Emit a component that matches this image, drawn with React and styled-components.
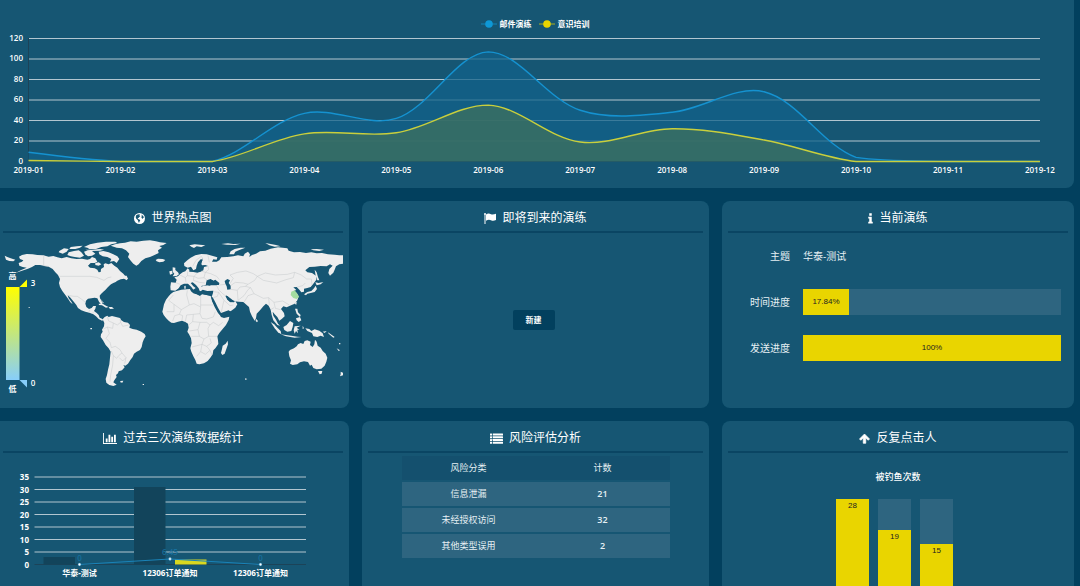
import React from 'react';
import styled, { createGlobalStyle } from 'styled-components';

const theme = {
    page: '#02405e',
    panel: '#165673',
    rule: '#0a4563',
    track: '#2e6580',
    headRow: '#14506e',
    white: '#ffffff',
    text: '#e6f0f4',
    yellow: '#e9d500',
    blue: '#0e98d6',
    line: '#b3c6d0',
    axis: '#1c4358',
    land: '#eeeeee',
    border: '#c4c8ca',
};

const GlobalStyle = createGlobalStyle`
  * {
    box-sizing: border-box;
  }
  body {
    margin: 0;
    background-color: ${theme.page};
    color: ${theme.text};
    font-family: "Open Sans", "Noto Sans CJK SC", sans-serif;
    overflow-x: hidden;
  }
`;

const Page = styled.main`
    display: flex;
    flex-direction: column;
    gap: 13px;
    padding-right: 6px;
    height: 100vh;
    overflow: hidden;
`;

const TopPanel = styled.section`
    flex: none;
    background-color: ${theme.panel};
    border-radius: 0 0 8px 0;
    padding-top: 18px;
`;

const Legend = styled.ul`
    display: flex;
    justify-content: center;
    gap: 7px;
    margin: 0;
    padding: 0 4px 0 0;
    list-style: none;
    font-size: 8px;
    line-height: 12px;
    font-weight: 600;
    color: ${theme.white};
`;

const LegendItem = styled.li`
    display: flex;
    align-items: center;
    gap: 3px;
`;

const Chart = styled.svg`
    display: block;
    width: 100%;
    height: auto;
`;

const LegendMark = styled.svg`
    width: 16px;
    height: 8px;
`;

const AxisText = styled.text`
    font-size: 8px;
    font-weight: ${(p) => (p.$bold ? 700 : 600)};
    fill: ${(p) => p.$color || theme.white};
    text-anchor: ${(p) => p.$anchor || 'middle'};
`;

const Grid = styled.div`
    flex: none;
    display: grid;
    grid-template-columns: 349fr 347fr 352fr;
    gap: 13px;
`;

const PanelBox = styled.section`
    display: flex;
    flex-direction: column;
    min-width: 0;
    min-height: 207px;
    background-color: ${theme.panel};
    border-radius: ${(p) => (p.$edge ? '0 8px 8px 0' : '8px')};
    padding: ${(p) => (p.$edge ? '0 6px 0 3px' : '0 6px')};
`;

const PanelTitle = styled.h2`
    display: flex;
    align-items: center;
    justify-content: center;
    gap: 6px;
    margin: 0;
    height: 32px;
    padding-top: 4px;
    border-bottom: 2px solid ${theme.rule};
    font-size: 12px;
    line-height: 16px;
    font-weight: 400;
    color: ${theme.white};

    svg {
        height: 11px;
        width: auto;
        fill: currentColor;
    }
`;

const Centered = styled.div`
    flex: 1;
    display: grid;
    place-items: center;
    padding: 0 4px 2px 0;
`;

const CreateBtn = styled.button`
    width: 42px;
    height: 20px;
    padding: 0;
    border: none;
    border-radius: 2px;
    background-color: ${theme.page};
    color: ${theme.white};
    font-family: inherit;
    font-size: 8px;
    font-weight: 600;
    cursor: pointer;
`;

const DrillList = styled.dl`
    display: grid;
    grid-template-columns: 62px 1fr;
    column-gap: 13px;
    row-gap: 20px;
    margin: 0;
    padding: 10px 7px 0 0;
    font-size: 10px;
    line-height: 26px;
`;

const DrillLabel = styled.dt`
    text-align: right;
`;

const DrillValue = styled.dd`
    margin: 0;
`;

const Track = styled.div`
    height: 26px;
    background-color: ${theme.track};
`;

const Fill = styled.div`
    height: 100%;
    background-color: ${theme.yellow};
    color: #222;
    font-family: "Liberation Sans", Arial, sans-serif;
    font-size: 8px;
    text-align: center;
`;

const RiskTable = styled.table`
    width: 80%;
    margin: 1px auto 0;
    table-layout: fixed;
    border-collapse: separate;
    border-spacing: 0 2px;
    font-size: 9px;
    line-height: 14px;
    text-align: center;

    th {
        height: 24px;
        padding: 0;
        font-weight: 400;
        background-color: ${theme.headRow};
    }

    td {
        height: 24px;
        padding: 0;
        background-color: ${theme.track};
    }
`;

const Count = styled.td`
    font-weight: 600;
`;

const ClickCaption = styled.p`
    margin: 17px 0 15px;
    font-size: 9px;
    line-height: 14px;
    font-weight: 500;
    text-align: center;
    color: ${theme.white};
`;

const Columns = styled.div`
    display: flex;
    justify-content: center;
    gap: 9px;
    padding-right: 7px;
`;

const ColumnTrack = styled.div`
    display: flex;
    align-items: flex-end;
    width: 33px;
    height: 97px;
    background-color: ${theme.track};
`;

const ColumnFill = styled(Fill)`
    width: 100%;
    line-height: 14px;
`;

// Icons

const GlobeIcon = () => (
    <svg viewBox="0 0 22 22" aria-hidden="true">
        <circle cx="11" cy="11" r="11" />
        <path
            fill={theme.panel}
            d="M4 5 L7 3 L11 2.500 L12 4 L10.500 5 L12.500 6.500 L10.500 8 L9 10 L7.500 10 L8 12 L11 13 L12.500 15 L11 17 L10 20 L8.500 17 L7.500 14 L5 12 L3.500 9 Z M14 3 L18 5.500 L20 9 L18.500 9.500 L17.500 12 L15.500 10 L14.500 8 L16 6 Z"
        />
    </svg>
);

const FlagIcon = () => (
    <svg viewBox="0 0 24 22" aria-hidden="true">
        <circle cx="2" cy="2" r="2" />
        <path d="M1 3 H3 V22 H1 Z" />
        <path d="M4 3 C8 0 11 1 14 2.500 C17 4 20 3 24 1.500 V14 C20 16 17 16 14 14.500 C11 13 8 13 4 15.500 Z" />
    </svg>
);

const InfoIcon = () => (
    <svg viewBox="0 0 10 22" aria-hidden="true">
        <path d="M2.500 0.500 H7.500 V5.500 H2.500 Z M0.500 7.500 H7.500 V17.500 H9.500 V21 H0.500 V17.500 H2.500 V11 H0.500 Z" />
    </svg>
);

const BarChartIcon = () => (
    <svg viewBox="0 128 2048 1536" aria-hidden="true">
        <path d="M640 896v512H384V896h256z m384-512v1024H768V384h256z m1024 1152v128H0V128h128v1408h1920z m-640-896v768h-256V640h256z m384-256v1024h-256V384h256z" />
    </svg>
);

const ListIcon = () => (
    <svg viewBox="0 0 26 22" aria-hidden="true">
        {[1, 6.5, 12, 17.5].map((y) => (
            <g key={y}>
                <rect x="0" y={y} width="4" height="4" rx="0.5" />
                <rect x="5.500" y={y} width="20.500" height="4" rx="0.5" />
            </g>
        ))}
    </svg>
);

const ArrowUpIcon = () => (
    <svg viewBox="0 0 22 22" aria-hidden="true">
        <path
            d="M11 2 L21 12 L18.500 14.500 L13.500 10 V20.500 H8.500 V10 L3.500 14.500 L1 12 Z"
            stroke="currentColor"
            strokeWidth="1.500"
            strokeLinejoin="round"
        />
    </svg>
);

const Panel = ({ icon, title, edge, children }) => (
    <PanelBox $edge={edge}>
        <PanelTitle>
            {icon}
            {title}
        </PanelTitle>
        {children}
    </PanelBox>
);

// Trend chart
const months = Array.from({ length: 12 }, (_, i) => `2019-${String(i + 1).padStart(2, '0')}`);
const mailDrills = [9, 0, 0, 47, 42, 107, 50, 48, 68, 4, 0, 0];
const trainings = [1, 0, 0, 27, 28, 55, 19, 32, 21, 0, 0, 0];

const trendX = (i) => 28.5 + i * 91.95;
const trendY = (v) => 131.5 - v * 1.025;

// smooth line through all points, control points never leave the plotted range
const smoothPath = (values) => {
    const pts = values.map((v, i) => [trendX(i), trendY(v)]);
    const top = Math.min(...pts.map((p) => p[1]));
    const bottom = Math.max(...pts.map((p) => p[1]));
    const clamp = (y) => Math.min(bottom, Math.max(top, y));
    const controls = pts.map((p, i) => {
        const prev = pts[i - 1];
        const next = pts[i + 1];
        if (!prev || !next) return [p, p];
        const dPrev = Math.hypot(p[0] - prev[0], p[1] - prev[1]);
        const dNext = Math.hypot(next[0] - p[0], next[1] - p[1]);
        const ratio = dNext / (dNext + dPrev);
        const vx = (next[0] - prev[0]) * 0.34;
        const vy = (next[1] - prev[1]) * 0.34;
        return [
            [p[0] - vx * (1 - ratio), clamp(p[1] - vy * (1 - ratio))],
            [p[0] + vx * ratio, clamp(p[1] + vy * ratio)],
        ];
    });
    return pts.reduce(
        (d, p, i) => (i === 0 ? `M${p}` : `${d} C${controls[i - 1][1]} ${controls[i][0]} ${p}`),
        ''
    );
};

const TrendChart = () => {
    const mail = smoothPath(mailDrills);
    const training = smoothPath(trainings);
    const close = ` L${trendX(11)},131.5 L${trendX(0)},131.5 Z`;
    return (
        <Chart viewBox="0 0 1074 158" role="img" aria-label="演练趋势">
            {[20, 40, 60, 80, 100, 120].map((v) => (
                <path key={v} d={`M28.500 ${trendY(v)} H1040`} stroke={theme.line} />
            ))}
            <path d="M28.500 8 V131.500 H1040" fill="none" stroke={theme.axis} />
            <path d={mail + close} fill="#11628a" fillOpacity="0.75" />
            <path d={training + close} fill="#3a6e62" fillOpacity="0.85" />
            <path d={mail} fill="none" stroke="#1592d0" strokeWidth="1.400" />
            <path d={training} fill="none" stroke="#c9cf3c" strokeWidth="1.400" />
            {[0, 20, 40, 60, 80, 100, 120].map((v) => (
                <AxisText key={v} x="23" y={trendY(v) + 2} $anchor="end">{v}</AxisText>
            ))}
            {months.map((m, i) => (
                <AxisText key={m} x={trendX(i)} y="143">{m}</AxisText>
            ))}
        </Chart>
    );
};

// World map
const americas = [
    // mainland north america
    'M57 65 L66 60 L80 57 L98 58 L112 60 L130 61 L146 65 L160 63 L172 67 L185 70 L200 66 L214 70 L230 72 L246 71 L262 74 L270 72 L276 66 L286 70 L292 80 L284 84 L272 84 L264 92 L270 98 L284 100 L292 104 L296 112 L302 111 L303 102 L312 96 L311 88 L316 85 L326 88 L334 84 L343 92 L352 98 L360 108 L370 116 L376 124 L383 130 L381 136 L372 131 L362 133 L352 137 L347 141 L340 144 L333 148 L328 152 L322 158 L316 165 L310 170 L303 177 L299 182 L300 190 L305 198 L307 206 L303 208 L297 200 L292 190 L284 188 L274 190 L264 191 L258 197 L256 206 L259 216 L267 222 L275 219 L280 213 L288 213 L286 221 L282 228 L290 234 L296 240 L299 248 L306 251 L311 255 L306 257 L296 252 L288 244 L280 238 L268 233 L256 230 L244 226 L234 219 L229 210 L220 199 L210 187 L203 181 L206 190 L214 200 L218 208 L211 202 L203 190 L196 180 L187 168 L180 156 L177 144 L180 132 L174 120 L166 112 L158 102 L146 95 L134 93 L120 90 L106 90 L96 96 L84 101 L66 107 L48 113 L62 106 L80 98 L68 96 L58 92 L56 84 L66 80 L70 76 L60 72 Z',
    // greenland
    'M332 32 L345 28 L360 25 L375 23 L392 19 L410 20 L430 17 L450 16 L468 19 L480 22 L500 24 L490 30 L478 33 L486 38 L474 46 L476 54 L462 61 L450 66 L436 70 L424 78 L416 88 L409 92 L400 86 L391 76 L384 66 L388 56 L378 46 L366 40 L350 38 Z',
    // arctic islands
    'M252 36 L270 28 L292 23 L318 20 L346 20 L352 24 L334 28 L322 34 L304 36 L288 42 L268 42 L262 38 Z',
    'M296 50 L310 48 L326 52 L340 58 L352 64 L358 72 L350 84 L342 78 L330 80 L334 72 L322 66 L308 64 L298 58 Z',
    'M206 52 L222 48 L236 46 L244 52 L252 62 L240 68 L224 66 L212 64 L202 60 Z',
    'M178 48 L192 40 L206 42 L200 50 L188 56 L176 52 Z',
    'M212 36 L230 34 L248 32 L240 38 L226 42 L208 42 Z',
    'M252 50 L264 46 L276 48 L286 56 L276 62 L264 64 L256 58 Z',
    'M256 44 L276 44 L300 42 L312 44 L300 47 L270 48 Z',
    'M286 84 L296 82 L304 88 L296 92 L286 90 Z',
    'M366 122 L380 122 L384 132 L374 130 L364 128 Z',
    // iceland, aleutians
    'M467 75 L474 71 L488 72 L496 75 L490 80 L478 82 L470 79 Z',
    'M14 62 L22 66 L32 70 L46 74 L40 79 L28 78 L18 74 Z',
    // caribbean and pacific dots
    'M296 206 L308 206 L318 212 L326 216 L318 218 L306 211 L297 210 Z',
    'M326 216 L336 216 L342 221 L330 222 Z',
    'M304 192 L308 200 L312 204 L308 205 Z',
    'M271 279 H276 V283 H271 Z M86 216 H89 V219 H86 Z M361 438 L370 437 L367 443 L361 442 Z M428 447 H432 V450 H428 Z',
    // south america
    'M308 253 L314 246 L322 242 L326 246 L336 243 L348 246 L360 249 L364 256 L372 261 L384 263 L390 270 L388 278 L398 282 L410 284 L424 290 L434 297 L437 304 L432 312 L428 322 L425 336 L420 345 L410 350 L402 356 L398 366 L391 375 L384 386 L376 392 L370 390 L374 397 L366 406 L356 409 L354 415 L348 420 L350 426 L344 434 L340 442 L350 449 L340 453 L328 450 L319 443 L317 432 L321 420 L324 404 L328 388 L330 368 L332 350 L326 340 L317 330 L309 316 L302 306 L303 298 L308 290 L306 284 L312 274 L313 264 Z',
];

const oldWorld = [
    // africa
    'M520 291 L530 288 L544 284 L560 283 L570 282 L573 289 L580 295 L590 298 L600 303 L606 298 L616 299 L632 303 L634 310 L638 320 L644 332 L650 344 L657 356 L663 366 L672 369 L688 365 L686 375 L678 390 L668 402 L658 414 L652 424 L654 436 L655 447 L646 460 L640 466 L638 478 L631 488 L623 498 L612 505 L598 508 L590 506 L586 495 L580 484 L574 470 L571 460 L575 444 L573 430 L567 418 L562 410 L566 398 L564 386 L556 381 L546 377 L534 380 L522 384 L514 383 L506 377 L498 369 L491 360 L487 350 L489 342 L492 328 L498 314 L506 304 L512 297 Z',
    'M683 437 L684 448 L679 462 L674 476 L667 480 L663 474 L666 462 L668 452 L677 446 Z',
    // eurasia
    'M512 286 L511 275 L513 262 L527 263 L530 254 L523 247 L534 244 L540 238 L548 232 L556 229 L563 220 L568 224 L568 230 L580 231 L592 233 L602 230 L610 226 L612 216 L624 213 L616 210 L606 211 L602 205 L608 195 L602 193 L594 202 L590 212 L588 222 L580 226 L573 215 L563 218 L553 213 L552 205 L562 196 L572 188 L586 181 L604 177 L620 178 L636 182 L652 187 L650 194 L640 193 L636 200 L650 200 L658 196 L664 187 L682 186 L700 184 L714 181 L730 184 L734 176 L744 170 L750 178 L748 186 L756 180 L768 176 L780 169 L796 167 L812 161 L834 157 L862 160 L866 167 L882 172 L900 171 L918 174 L934 172 L950 175 L966 174 L984 178 L1004 179 L1018 181 L1030 181 L1030 206 L1018 208 L1008 214 L1004 224 L1000 233 L990 242 L985 234 L988 222 L998 212 L990 208 L980 214 L962 213 L944 215 L928 216 L916 226 L922 232 L936 234 L948 242 L949 254 L940 266 L932 276 L922 279 L912 281 L912 290 L904 292 L898 284 L890 276 L880 277 L889 285 L881 288 L890 294 L896 304 L892 316 L884 326 L870 332 L860 337 L850 334 L843 342 L852 354 L854 364 L846 371 L838 377 L832 366 L824 358 L818 350 L820 362 L828 374 L834 386 L840 392 L832 390 L820 376 L815 360 L812 344 L806 332 L798 326 L790 334 L780 346 L770 356 L768 370 L764 377 L756 364 L750 350 L747 336 L740 330 L730 321 L716 320 L702 319 L694 312 L682 303 L676 302 L682 314 L692 322 L706 319 L712 328 L706 338 L694 347 L678 355 L662 361 L656 350 L648 334 L640 318 L635 306 L639 294 L640 287 L622 288 L608 284 L602 277 L610 272 L628 271 L650 271 L657 268 L648 262 L636 262 L640 256 L626 256 L620 262 L617 270 L604 273 L608 284 L600 290 L596 280 L588 270 L578 262 L572 264 L580 274 L587 279 L580 284 L574 276 L564 266 L552 266 L542 271 L536 280 L526 287 Z',
    // british isles
    'M518 217 L526 218 L526 225 L534 232 L537 238 L530 243 L518 244 L523 236 L518 230 Z',
    'M508 229 L516 227 L518 236 L510 239 Z',
    // arctic islands
    'M568 151 L584 148 L600 149 L616 151 L604 156 L590 154 L582 159 L574 155 Z',
    'M688 178 L692 169 L704 162 L722 158 L736 158 L718 165 L706 170 L702 178 Z',
    'M664 147 L684 145 L700 147 L722 146 L706 150 L680 149 Z',
    'M796 144 L812 147 L828 150 L842 154 L824 155 L808 151 Z',
    'M932 163 L950 162 L972 164 L958 168 L940 166 Z',
    // mediterranean islands
    'M560 286 H568 V289 H560 Z M553 273 L557 272 L557 281 L553 281 Z M606 292 H614 V294 H606 Z',
    // japan and sakhalin
    'M946 262 L956 264 L970 261 L962 268 L950 271 Z',
    'M947 272 L951 282 L944 291 L932 294 L922 296 L918 301 L912 298 L922 291 L934 288 L942 280 Z',
    'M944 224 L950 232 L954 246 L958 256 L952 256 L947 242 Z',
    // south east asia
    'M886 321 L890 321 L889 329 L885 327 Z M885 341 L892 341 L894 352 L902 360 L900 366 L890 356 Z M888 370 L900 366 L904 376 L896 381 L890 376 Z',
    'M812 381 L822 388 L832 398 L842 408 L844 418 L834 412 L824 400 Z',
    'M842 418 L858 420 L874 422 L892 425 L904 426 L884 428 L858 424 Z',
    'M850 396 L860 390 L870 378 L880 384 L878 396 L874 408 L862 410 L853 405 Z',
    'M884 394 L902 392 L890 398 L898 404 L892 404 L894 415 L888 408 L884 416 L881 406 Z M908 392 L912 400 L908 402 Z',
    'M916 400 L928 402 L934 408 L944 403 L958 407 L968 415 L972 426 L962 422 L952 426 L940 424 L936 414 L922 408 Z',
    'M968 410 L980 408 L974 414 Z M984 412 L1004 426 L1000 428 L986 416 Z M1017 444 H1021 V448 H1017 Z M1010 460 L1020 466 L1016 468 Z',
    'M768 371 L774 378 L771 382 L767 378 Z M735 550 L742 552 L736 555 Z',
    // australia, tasmania, new zealand
    'M866 470 L870 465 L882 460 L890 454 L894 448 L902 444 L910 447 L914 438 L922 436 L932 440 L930 450 L938 456 L943 448 L945 434 L950 440 L953 452 L962 458 L968 468 L977 476 L982 488 L979 500 L974 512 L964 521 L950 523 L940 519 L935 509 L930 512 L924 501 L912 499 L900 502 L892 508 L878 510 L870 506 L873 496 L868 484 Z',
    'M954 528 L967 528 L965 536 L959 538 Z',
    'M1022 530 L1030 534 L1030 540 L1020 544 L1022 538 Z',
];

// seas cut out of the land shapes
const seas = [
    'M618 268 L620 256 L632 252 L640 257 L646 254 L658 264 L657 270 L640 267 L628 272 Z',
    'M674 258 L682 252 L690 256 L686 264 L692 272 L692 283 L682 284 L680 274 L676 266 Z',
    'M634 307 L638 307 L646 322 L654 338 L663 354 L686 346 L692 350 L688 358 L664 364 L654 354 L644 336 L636 318 Z',
    'M678 301 L684 305 L692 314 L704 318 L702 322 L690 321 L682 313 Z',
    'M600 206 L604 194 L608 190 L604 208 L600 220 L590 225 L592 212 Z',
    'M570 281 L580 284 L592 288 L604 289 L634 290 L634 302 L616 299 L606 296 L598 300 L582 294 Z',
];

const borderLines = [
    'M131 60 V92 L144 94 M179 124 H270 L290 127 L302 132 L312 136 L324 128 L334 126',
    'M203 181 L222 184 L232 184 L244 192 L256 202 M276 236 L282 230 M266 232 L270 224',
    'M322 244 L326 258 L340 264 L338 280 L322 276 L310 282 M340 264 L352 270 L362 262 L360 250 M362 262 L368 274 L386 270 M322 276 L328 296 L318 310 L330 322 L334 338 L346 334 L360 344 L366 354 L356 362 L350 370 L340 362 L334 348 M366 354 L378 368 L368 378 L358 368 M340 362 L338 390 L332 420 L330 440 M378 368 L374 386',
];

const oldBorderLines = [
    'M520 300 L506 316 L522 328 V350 L500 350 M522 328 L544 344 L568 330 L560 300 L562 286 M568 330 L582 326 L602 336 V302 M602 330 H640 M602 336 L600 356 L606 370 L620 372 L640 366 L646 350 M544 344 L538 358 L524 362 L518 378 M538 358 L548 362 L546 376 M556 380 L560 360 L580 358 L600 356 M580 358 L578 380 L566 390 M578 380 L600 382 L620 382 L630 390 L640 382 L656 392 L668 382 M600 382 L594 404 L568 408 M594 404 L598 424 H574 M598 424 L612 432 L626 424 L624 400 L630 390 M626 424 L652 424 M612 432 L606 448 L576 456 M606 448 L620 454 L634 444 L630 430 M606 448 L602 470 L590 484 M602 470 L616 478 L630 466 L620 454 M630 466 L636 480',
    'M528 263 L540 268 M540 240 L556 248 L558 262 M563 230 L562 242 L556 248 M562 242 L582 244 L592 234 M582 244 L594 250 L612 248 L622 256 M582 244 L580 256 L598 262 L614 264 M612 248 L616 232 L604 228 M616 232 L632 236 L650 244 L658 254 M608 190 L604 184 L588 196 L578 214 M624 182 L628 202 M624 213 L626 224 L616 232',
    'M658 270 L676 268 M650 272 L656 284 L668 296 L676 302 M640 290 L656 292 L672 316 L690 332 L700 330 M640 308 L652 304 L656 292 M672 316 L668 332 L664 352 M690 266 L700 250 L690 240 L712 232 L738 228 L760 236 L772 244 L764 256 L744 268 L730 264 L706 262 L692 272 M692 283 L712 286 L720 276 L736 274 L744 268 M712 286 L714 316 L732 302 L744 284 L752 278 M736 274 L752 278 L762 296 L790 310 L806 308 L808 330 M732 322 L744 302 L762 296 M772 244 L796 234 L826 240 L862 238 L884 232 L904 240 L920 252 L934 252 L936 270 M772 244 L790 256 L830 264 L858 254 L880 248 L884 232 M806 308 L822 322 L848 318 L868 330 M822 322 L826 340 L842 344 M812 344 L822 338 M892 276 L908 272 L916 264',
];

const WorldMap = () => (
    <Chart viewBox="0 0 340 164" role="img" aria-label="世界热点图">
        <defs>
            <linearGradient id="heat" x1="0" y1="0" x2="0" y2="1">
                <stop offset="0" stopColor="#ffff00" />
                <stop offset="1" stopColor="#87cefa" />
            </linearGradient>
        </defs>
        <g transform="translate(-3 2) scale(0.33333)" fill={theme.land} stroke="none">
            {americas.map((d) => <path key={d} d={d} />)}
            {borderLines.map((d) => <path key={d} d={d} fill="none" stroke={theme.border} strokeWidth="1.500" />)}
            <g transform="translate(0 -120)">
                {oldWorld.map((d) => <path key={d} d={d} />)}
                {seas.map((d) => <path key={d} d={d} fill={theme.panel} />)}
                {oldBorderLines.map((d) => <path key={d} d={d} fill="none" stroke={theme.border} strokeWidth="1.500" />)}
                <path d="M874 290 L884 286 L892 296 L897 306 L890 312 L880 309 L872 300 Z" fill="#a3dda0" />
            </g>
        </g>
        <rect x="3" y="54" width="13.500" height="93" fill="url(#heat)" />
        <path d="M16.500 54 H24 V46.500 Z" fill="#ffff00" />
        <path d="M16.500 147 H24 V154.500 Z" fill="#87cefa" />
        <AxisText x="9.500" y="46">高</AxisText>
        <AxisText x="9.500" y="159">低</AxisText>
        <AxisText x="30" y="53">3</AxisText>
        <AxisText x="30" y="153">0</AxisText>
    </Chart>
);

// Last three drills
const drills = [
    { name: '华泰-测试', sent: 3, clicked: 0, rate: 0, label: '0' },
    { name: '12306订单通知', sent: 31, clicked: 2, rate: 2.2, label: '6.45' },
    { name: '12306订单通知', sent: 0, clicked: 0, rate: 0, label: '0' },
];

const drillX = (i) => 76.5 + i * 90.5;
const drillY = (v) => 111.5 - v * 2.5;

const DrillChart = () => (
    <Chart viewBox="0 0 340 132" role="img" aria-label="过去三次演练数据统计">
        {[5, 10, 15, 20, 25, 30, 35].map((v) => (
            <path key={v} d={`M31.500 ${drillY(v)} H303`} stroke={theme.line} />
        ))}
        <path d="M31.500 111.500 H303" stroke={theme.axis} />
        {drills.map((d, i) => (
            <g key={i}>
                <rect x={drillX(i) - 36} y={drillY(d.sent)} width="31.500" height={d.sent * 2.5} fill="#12445b" />
                <rect x={drillX(i) + 5} y={drillY(d.clicked)} width="31.500" height={d.clicked * 2.5} fill="#d9d820" />
            </g>
        ))}
        <path
            d={`M${drills.map((d, i) => `${drillX(i)} ${drillY(d.rate)}`).join(' L')}`}
            fill="none"
            stroke="#1a83b8"
        />
        {drills.map((d, i) => (
            <g key={i}>
                <circle cx={drillX(i)} cy={drillY(d.rate)} r="1.400" fill={theme.white} stroke="#1a83b8" strokeWidth="0.5" />
                <AxisText x={drillX(i)} y={drillY(d.rate) - 4} $color="#176f9c">{d.label}</AxisText>
                <AxisText x={drillX(i)} y="123" $bold>{d.name}</AxisText>
            </g>
        ))}
        {[0, 5, 10, 15, 20, 25, 30, 35].map((v) => (
            <AxisText key={v} x="26" y={drillY(v) + 3} $anchor="end" $bold>{v}</AxisText>
        ))}
    </Chart>
);

const risks = [
    ['信息泄漏', 21],
    ['未经授权访问', 32],
    ['其他类型误用', 2],
];

const clickers = [28, 19, 15];

const Progress = ({ value, label }) => (
    <Track role="progressbar" aria-label={label} aria-valuenow={value}>
        <Fill style={{ width: `${value}%` }}>{value}%</Fill>
    </Track>
);

const App = () => {
    return (
        <Page>
            <GlobalStyle />
            <TopPanel>
                <Legend>
                    {[['邮件演练', theme.blue], ['意识培训', theme.yellow]].map(([name, color]) => (
                        <LegendItem key={name}>
                            <LegendMark viewBox="0 0 16 8">
                                <path d="M0 4 H16" stroke={color} opacity="0.7" />
                                <circle cx="8" cy="4" r="3.800" fill={color} />
                            </LegendMark>
                            {name}
                        </LegendItem>
                    ))}
                </Legend>
                <TrendChart />
            </TopPanel>

            <Grid>
                <Panel edge icon={<GlobeIcon />} title="世界热点图">
                    <WorldMap />
                </Panel>
                <Panel icon={<FlagIcon />} title="即将到来的演练">
                    <Centered>
                        <CreateBtn type="button">新建</CreateBtn>
                    </Centered>
                </Panel>
                <Panel icon={<InfoIcon />} title="当前演练">
                    <DrillList>
                        <DrillLabel>主题</DrillLabel>
                        <DrillValue>华泰-测试</DrillValue>
                        <DrillLabel>时间进度</DrillLabel>
                        <DrillValue><Progress value={17.84} label="时间进度" /></DrillValue>
                        <DrillLabel>发送进度</DrillLabel>
                        <DrillValue><Progress value={100} label="发送进度" /></DrillValue>
                    </DrillList>
                </Panel>

                <Panel edge icon={<BarChartIcon />} title="过去三次演练数据统计">
                    <DrillChart />
                </Panel>
                <Panel icon={<ListIcon />} title="风险评估分析">
                    <RiskTable>
                        <thead>
                            <tr>
                                <th scope="col">风险分类</th>
                                <th scope="col">计数</th>
                            </tr>
                        </thead>
                        <tbody>
                            {risks.map(([name, count]) => (
                                <tr key={name}>
                                    <td>{name}</td>
                                    <Count>{count}</Count>
                                </tr>
                            ))}
                        </tbody>
                    </RiskTable>
                </Panel>
                <Panel icon={<ArrowUpIcon />} title="反复点击人">
                    <ClickCaption>被钓鱼次数</ClickCaption>
                    <Columns>
                        {clickers.map((n) => (
                            <ColumnTrack key={n}>
                                <ColumnFill style={{ height: `${(n / clickers[0]) * 100}%` }}>{n}</ColumnFill>
                            </ColumnTrack>
                        ))}
                    </Columns>
                </Panel>
            </Grid>
        </Page>
    );
};

export default App;
